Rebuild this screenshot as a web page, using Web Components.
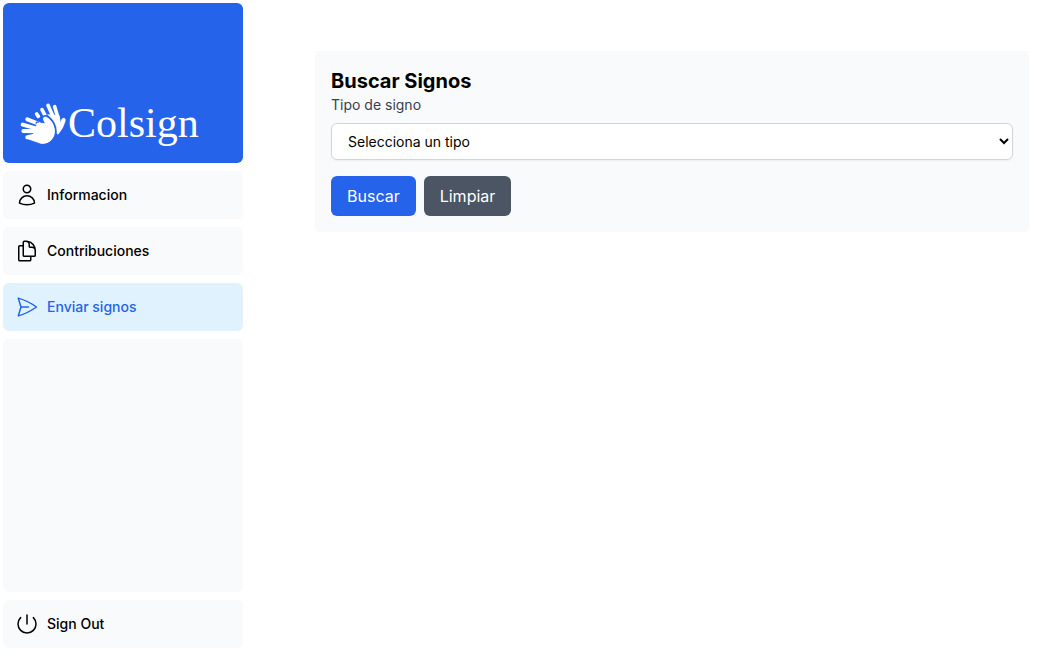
<!DOCTYPE html>
<html lang="es">
<head>
<meta charset="utf-8">
<meta name="viewport" content="width=device-width, initial-scale=1">
<title>Colsign</title>
<style>
body { margin: 0; background: #fff; color: #000; font-family: Inter, sans-serif; font-size: 16px; line-height: 24px; }
</style>
</head>
<body>
<colsign-app></colsign-app>

<template id="app-tpl">
<style>
:host { display: grid; grid-template-columns: 240px 1fr; gap: 8px; min-height: 100vh; box-sizing: border-box; padding: 3px 23px 8px 3px; }
nav { display: flex; flex-direction: column; gap: 8px; }
.filler { flex: 1; background: #f9fafb; border-radius: 6px; }
main { padding: 48px 0 48px 64px; }
</style>
<nav>
  <brand-tile></brand-tile>
  <nav-item><svg slot="icon" viewBox="0 0 24 24"><path d="M15.75 6a3.75 3.75 0 1 1-7.5 0 3.75 3.75 0 0 1 7.5 0ZM4.501 20.118a7.5 7.5 0 0 1 14.998 0A17.933 17.933 0 0 1 12 21.75c-2.676 0-5.216-.584-7.499-1.632Z"/></svg>Informacion</nav-item>
  <nav-item><svg slot="icon" viewBox="0 0 24 24"><path d="M15.75 17.25v3.375c0 .621-.504 1.125-1.125 1.125h-9.75a1.125 1.125 0 0 1-1.125-1.125V7.875c0-.621.504-1.125 1.125-1.125H6.75a9.06 9.06 0 0 1 1.5.124m7.5 10.376h3.375c.621 0 1.125-.504 1.125-1.125V11.25c0-4.46-3.243-8.161-7.5-8.876a9.06 9.06 0 0 0-1.5-.124H9.375c-.621 0-1.125.504-1.125 1.125v3.5m7.5 10.375H9.375a1.125 1.125 0 0 1-1.125-1.125v-9.25m12 6.625v-1.875a3.375 3.375 0 0 0-3.375-3.375h-1.5a1.125 1.125 0 0 1-1.125-1.125v-1.5a3.375 3.375 0 0 0-3.375-3.375H9.75"/></svg>Contribuciones</nav-item>
  <nav-item active><svg slot="icon" viewBox="0 0 24 24"><path d="M6 12 3.269 3.125A59.769 59.769 0 0 1 21.485 12 59.768 59.768 0 0 1 3.27 20.875L5.999 12Zm0 0h7.5"/></svg>Enviar signos</nav-item>
  <div class="filler"></div>
  <nav-item action><svg slot="icon" viewBox="0 0 24 24"><path d="M5.636 5.636a9 9 0 1 0 12.728 0M12 3v9"/></svg>Sign Out</nav-item>
</nav>
<main><search-panel></search-panel></main>
</template>

<template id="brand-tpl">
<style>
:host { display: block; }
a { display: flex; align-items: flex-end; gap: 1px; box-sizing: border-box; height: 160px; padding: 16px; border-radius: 6px; background: #2563eb; color: #fff; text-decoration: none; }
svg { width: 48px; height: 45px; flex: none; }
span { font: 42px/48px "Liberation Serif", serif; }
</style>
<a href="#">
<svg viewBox="3 6 144 135" aria-hidden="true" fill="none" stroke="#fff" stroke-linecap="round" stroke-linejoin="round">
  <path d="M56 42l5 7M72 29l8 15M90 16l16 36M110 20l10 34" stroke-width="11"/>
  <path d="M90 44L123 46L128 70Q130 54 138 54Q144 56 141 65Q136 84 121 102Q116 104 117 96Q118 68 90 44Z" fill="#fff" stroke-width="2"/>
  <path d="M28 58l36 14M14 74l40 11M16 93l40 1M28 112l30-6" stroke-width="12"/>
  <path d="M58 69L83 71Q73 57 78 52Q83 48 92 56Q106 68 109 86Q112 106 100 119Q88 132 68 130L29 116L50 98Z" fill="#fff" stroke="#2563eb" stroke-width="11" paint-order="stroke" stroke-dasharray="0 24 130 400"/>
  <path d="M58 69L83 71Q73 57 78 52Q83 48 92 56Q106 68 109 86Q112 106 100 119Q88 132 68 130L29 116L50 98Z" fill="#fff" stroke-width="2"/>
</svg><span>Colsign</span></a>
</template>

<template id="item-tpl">
<style>
:host { display: block; }
a, button { display: flex; align-items: center; gap: 8px; box-sizing: border-box; width: 100%; height: 48px; padding: 12px; border: 0; border-radius: 6px; background: #f9fafb; color: #000; font: 500 14px/20px Inter, sans-serif; text-decoration: none; text-align: left; cursor: pointer; }
:host([active]) a { background: #e0f2fe; color: #2563eb; }
::slotted(svg) { width: 24px; height: 24px; flex: none; fill: none; stroke: currentColor; stroke-width: 1.5; stroke-linecap: round; stroke-linejoin: round; }
</style>
</template>

<template id="panel-tpl">
<style>
:host { display: block; }
form { padding: 16px; border-radius: 4px; background: #f9fafb; }
h1 { margin: 0; font-size: 20px; line-height: 28px; font-weight: 700; }
label { display: block; font-size: 14px; line-height: 20px; color: #374151; }
select { display: block; box-sizing: border-box; width: 100%; height: 37px; margin: 8px 0 16px; padding: 8px 12px; border: 1px solid #d1d5db; border-radius: 6px; background: #fff; color: #000; font: 14px/20px Inter, sans-serif; box-shadow: 0 1px 2px rgb(0 0 0 / .05); }
.actions { display: flex; gap: 8px; }
</style>
<form>
  <h1>Buscar Signos</h1>
  <label for="tipo">Tipo de signo</label>
  <select id="tipo"><option>Selecciona un tipo</option></select>
  <div class="actions"><action-button>Buscar</action-button><action-button tone="neutral">Limpiar</action-button></div>
</form>
</template>

<template id="button-tpl">
<style>
:host { display: block; }
button { padding: 8px 16px; border: 0; border-radius: 6px; background: #2563eb; color: #fff; font: 16px/24px Inter, sans-serif; cursor: pointer; }
:host([tone="neutral"]) button { background: #4b5563; }
</style>
<button type="button"><slot></slot></button>
</template>

<script>
class TemplateElement extends HTMLElement {
  constructor() {
    super();
    const tpl = document.getElementById(this.constructor.template);
    this.attachShadow({ mode: "open" }).append(tpl.content.cloneNode(true));
  }
}
class ActionButton extends TemplateElement { static template = "button-tpl"; }
class BrandTile extends TemplateElement { static template = "brand-tpl"; }
class NavItem extends TemplateElement {
  static template = "item-tpl";
  connectedCallback() {
    if (this.control) return;
    this.control = document.createElement(this.hasAttribute("action") ? "button" : "a");
    if (this.control.localName === "a") this.control.href = "#";
    else this.control.type = "button";
    if (this.hasAttribute("active")) this.control.setAttribute("aria-current", "page");
    this.control.innerHTML = '<slot name="icon"></slot><span><slot></slot></span>';
    this.shadowRoot.append(this.control);
  }
}
class SearchPanel extends TemplateElement { static template = "panel-tpl"; }
class ColsignApp extends TemplateElement { static template = "app-tpl"; }
customElements.define("action-button", ActionButton);
customElements.define("brand-tile", BrandTile);
customElements.define("nav-item", NavItem);
customElements.define("search-panel", SearchPanel);
customElements.define("colsign-app", ColsignApp);
</script>
</body>
</html>
